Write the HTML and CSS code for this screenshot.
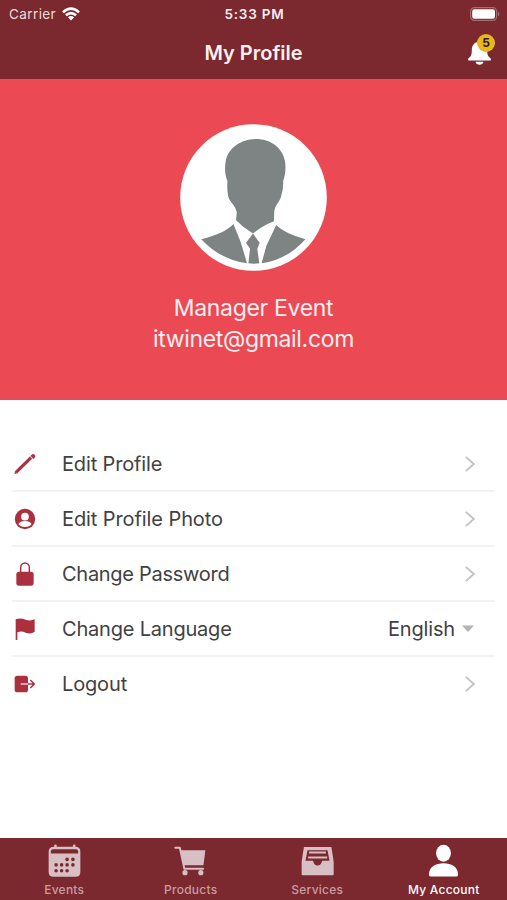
FILE: index.html
```html
<!DOCTYPE html>
<html lang="en">
<head>
<meta charset="utf-8">
<meta name="viewport" content="width=device-width, initial-scale=1">
<title>My Profile</title>
<link rel="stylesheet" href="styles.css">
</head>
<body>
<div class="app">
  <header class="header">
    <div class="status">
      <div class="carrier">
        <span>Carrier</span>
        <svg class="wifi" viewBox="0 0 55 42"><g fill="none" stroke="currentColor" stroke-width="8"><path d="M3 16Q27.500-7 52 16"/><path d="M12 25Q27.500 11 43 25"/></g><path fill="currentColor" d="M18 31Q27.500 23 37 31L27.500 41Z"/></svg>
      </div>
      <span class="time">5:33 PM</span>
      <svg class="battery" viewBox="0 0 30 14"><rect x=".6" y=".6" width="26" height="12.800" rx="3.800" fill="none" stroke="#a56c72" stroke-width="1.200"/><rect x="2.200" y="2.200" width="22.800" height="9.600" rx="2.200" fill="#fff"/><path fill="#a56c72" d="M28 4.500q3 2.500 0 5Z"/></svg>
    </div>
    <div class="titlebar">
      <h1>My Profile</h1>
      <div class="bell">
        <svg viewBox="0 0 23 25"><path fill="#fff" d="M11.500 0c1.500 0 2 .8 2 2 4 1 5.700 4 5.700 8 0 5 .8 6.500 3.600 8.500v2H.2v-2c2.800-2 3.600-3.500 3.600-8.500 0-4 1.700-7 5.700-8 0-1.200.5-2 2-2ZM7.500 21.800h8q-.8 3-4 3t-4-3Z"/></svg>
        <span class="badge">5</span>
      </div>
    </div>
  </header>

  <section class="profile">
    <svg class="avatar" viewBox="30 26 443 443">
      <circle cx="251.500" cy="247.500" r="221" fill="#fff"/>
      <g fill="#7e8384">
        <path d="M257 71C299 70 339 95 346 137C350 160 347 181 341 197Q342 223 334 247C328 263 316 272 314 291L313 319Q275 334 250 356Q220 338 199 316L201 291C196 270 180 263 175 244Q171 220 173 198C165 180 164 159 168 137C175 98 214 72 257 71Z"/>
        <path d="M191 327L213 382L232 446Q152 435 94 373Q166 355 191 327ZM320 330Q344 355 408 373Q353 435 276 446L290 394ZM250 356L270 384L263 403L269 446Q252 449 236 446L241 402L229 384Z"/>
      </g>
    </svg>
    <div class="name">Manager Event</div>
    <div class="email">itwinet@gmail.com</div>
  </section>

  <main class="menu">
    <div class="row">
      <svg class="icon" viewBox="0 0 66 66"><path d="M6 58L51 14" fill="none" stroke="currentColor" stroke-width="9.500"/><path fill="currentColor" d="M2.600 54.600L9.400 61.400L2 63ZM49.500 9L53 5q5-4 9 0t0 9l-4 4Z"/><path d="M49 9l9 9" stroke="#d99aa2" stroke-width="1.500"/></svg>
      <span class="label l1">Edit Profile</span>
      <svg class="chevron" viewBox="0 0 10 16"><path d="M.8.8L8.800 8L.8 15.200"/></svg>
    </div>
    <div class="row">
      <svg class="icon" viewBox="0 0 66 66"><circle cx="33" cy="33" r="30.500" fill="currentColor"/><circle cx="33" cy="26" r="11.500" fill="#fff"/><path fill="#fff" d="M13 48Q19 39 33 39T53 48Q46 57 33 57T13 48Z"/></svg>
      <span class="label l2">Edit Profile Photo</span>
      <svg class="chevron" viewBox="0 0 10 16"><path d="M.8.8L8.800 8L.8 15.200"/></svg>
    </div>
    <div class="row">
      <svg class="icon lock" viewBox="0 0 66 72"><path d="M20 32V17a13 14 0 0 1 26 0v15" fill="none" stroke="currentColor" stroke-width="4.500"/><rect x="7" y="29" width="52" height="42" rx="8" fill="currentColor"/></svg>
      <span class="label l3">Change Password</span>
      <svg class="chevron" viewBox="0 0 10 16"><path d="M.8.8L8.800 8L.8 15.200"/></svg>
    </div>
    <div class="row">
      <svg class="icon" viewBox="0 0 66 66"><path fill="currentColor" d="M5 4Q19-2 35 5Q49 10 62 4V41Q51 50 35 44Q22 37 10 43V66H5Z"/></svg>
      <span class="label l4">Change Language</span>
      <span class="language">English</span>
      <svg class="caret" viewBox="0 0 12 7"><path fill="#b4b4b4" d="M0 .5H12L6 7Z"/></svg>
    </div>
    <div class="row">
      <svg class="icon" viewBox="0 0 66 66"><rect x="2" y="8" width="40" height="50" rx="8" fill="currentColor"/><path d="M20 33H42" stroke="#f3dcdf" stroke-width="4"/><path d="M42 33H61M49 21L61 33L49 45" fill="none" stroke="currentColor" stroke-width="4.500"/></svg>
      <span class="label l5">Logout</span>
      <svg class="chevron" viewBox="0 0 10 16"><path d="M.8.8L8.800 8L.8 15.200"/></svg>
    </div>
  </main>

  <nav class="tabs">
    <div class="tab">
      <svg viewBox="0 0 102 102"><path fill="currentColor" d="M19 7V4a4 4 0 0 1 8 0v3h50V4a4 4 0 0 1 8 0v3q15 0 15 15v63q0 15-15 15H17Q2 100 2 85V22Q2 7 19 7Z"/><path fill="#7b282f" d="M9 28V21q0-6 7-6h70q7 0 7 6v7Z"/><g fill="#7b282f"><circle cx="59" cy="46" r="5.500"/><circle cx="77" cy="46" r="5.500"/><circle cx="25" cy="63" r="5.500"/><circle cx="42" cy="63" r="5.500"/><circle cx="59" cy="63" r="5.500"/><circle cx="77" cy="63" r="5.500"/><circle cx="25" cy="81" r="5.500"/><circle cx="42" cy="81" r="5.500"/><circle cx="59" cy="81" r="5.500"/></g></svg>
      <span>Events</span>
    </div>
    <div class="tab">
      <svg viewBox="0 0 102 102"><path d="M4 10H18L32 75H90" fill="none" stroke="currentColor" stroke-width="6" stroke-linecap="round" stroke-linejoin="round"/><path fill="currentColor" d="M20 18H97L91 64H29Z"/><circle cx="34" cy="87" r="8" fill="currentColor"/><circle cx="83" cy="87" r="8" fill="currentColor"/></svg>
      <span>Products</span>
    </div>
    <div class="tab">
      <svg viewBox="0 0 102 102"><path fill="currentColor" d="M9 8H94L101 53V92q0 3-3 3H5q-3 0-3-3V53Z"/><path d="M20 18H82L88 50H66Q61 65 51 65T37 50H14Z" fill="#7b282f"/><path d="M25 25H77M22 40H81" stroke="currentColor" stroke-width="6"/></svg>
      <span>Services</span>
    </div>
    <div class="tab active">
      <svg viewBox="0 0 102 102"><ellipse cx="51" cy="27" rx="23" ry="26" fill="currentColor"/><path fill="currentColor" d="M6 94C6 68 27 58 51 58S96 68 96 94Q96 99 89 99H13Q6 99 6 94Z"/></svg>
      <span>My Account</span>
    </div>
  </nav>
</div>
</body>
</html>
```
FILE: styles.css
```css
* { box-sizing: border-box; }

body {
  margin: 0;
  background: #fff;
  font-family: Inter, "Liberation Sans", sans-serif;
  color: #414143;
}

.app {
  display: flex;
  flex-direction: column;
  height: 900px;
}

.header {
  height: 79px;
  background: #7b282f;
  color: #faf0ef;
}

.status {
  display: grid;
  grid-template-columns: 1fr auto 1fr;
  align-items: center;
  height: 27px;
  padding: 0 7px 0 9px;
  font-size: 13.5px;
}

.carrier {
  display: flex;
  align-items: center;
  gap: 6px;
  color: #ecdcdc;
  letter-spacing: .4px;
}

.wifi { width: 18px; height: 14px; color: #fff; }
.time { font-weight: 600; letter-spacing: .8px; }
.battery { width: 30px; height: 14px; justify-self: end; }

.titlebar {
  display: grid;
  grid-template-columns: 1fr auto 1fr;
  align-items: center;
  height: 51px;
  padding: 0 16px;
}

h1 {
  grid-column: 2;
  margin: 0;
  font-size: 20px;
  font-weight: 600;
  line-height: 26px;
}

.bell {
  position: relative;
  justify-self: end;
  width: 23px;
  height: 25px;
}

.bell svg { display: block; width: 23px; height: 25px; }

.badge {
  position: absolute;
  top: -6px;
  left: 9px;
  width: 18px;
  height: 18px;
  border-radius: 50%;
  background: #eab61c;
  color: #2b1b12;
  font-size: 12px;
  font-weight: 700;
  line-height: 18px;
  text-align: center;
}

.profile {
  display: flex;
  flex-direction: column;
  align-items: center;
  height: 321px;
  padding-top: 45px;
  background: #eb4a55;
  color: #fceeee;
  font-size: 23px;
  line-height: 31px;
  letter-spacing: -.33px;
}

.avatar { width: 147px; height: 147px; margin-bottom: 22px; }

.menu {
  flex: 1;
  padding: 37px 12px 0;
}

.row {
  display: flex;
  align-items: center;
  height: 55px;
  padding: 0 20px 0 2px;
  border-bottom: 2px solid #f3f3f3;
  font-size: 20px;
  letter-spacing: -.15px;
}

.row:last-child { border-bottom-color: transparent; }
.icon { width: 22px; height: 22px; margin-right: 26px; color: #aa303f; }
.lock { height: 24px; }
.label { flex: 1; }
.l2 { letter-spacing: -.09px; }
.l3 { letter-spacing: -.28px; }
.l4 { letter-spacing: -.2px; }

.chevron {
  width: 10px;
  height: 16px;
  fill: none;
  stroke: #c3c3c3;
  stroke-width: 1.8;
}

.caret { width: 12px; height: 7px; margin: 0 1px 0 7px; }

.tabs {
  display: grid;
  grid-template-columns: repeat(4, 126.5px);
  height: 62px;
  padding: 6px 0 0 1px;
  background: #7b282f;
}

.tab {
  display: flex;
  flex-direction: column;
  align-items: center;
  color: #d8bfc4;
  font-size: 12px;
  font-weight: 500;
  line-height: 16px;
  letter-spacing: .25px;
}

.tab svg { width: 33px; height: 34px; margin-bottom: 4px; }
.tab span { color: #c99da1; }
.active, .tab.active span { color: #fff; }
```
